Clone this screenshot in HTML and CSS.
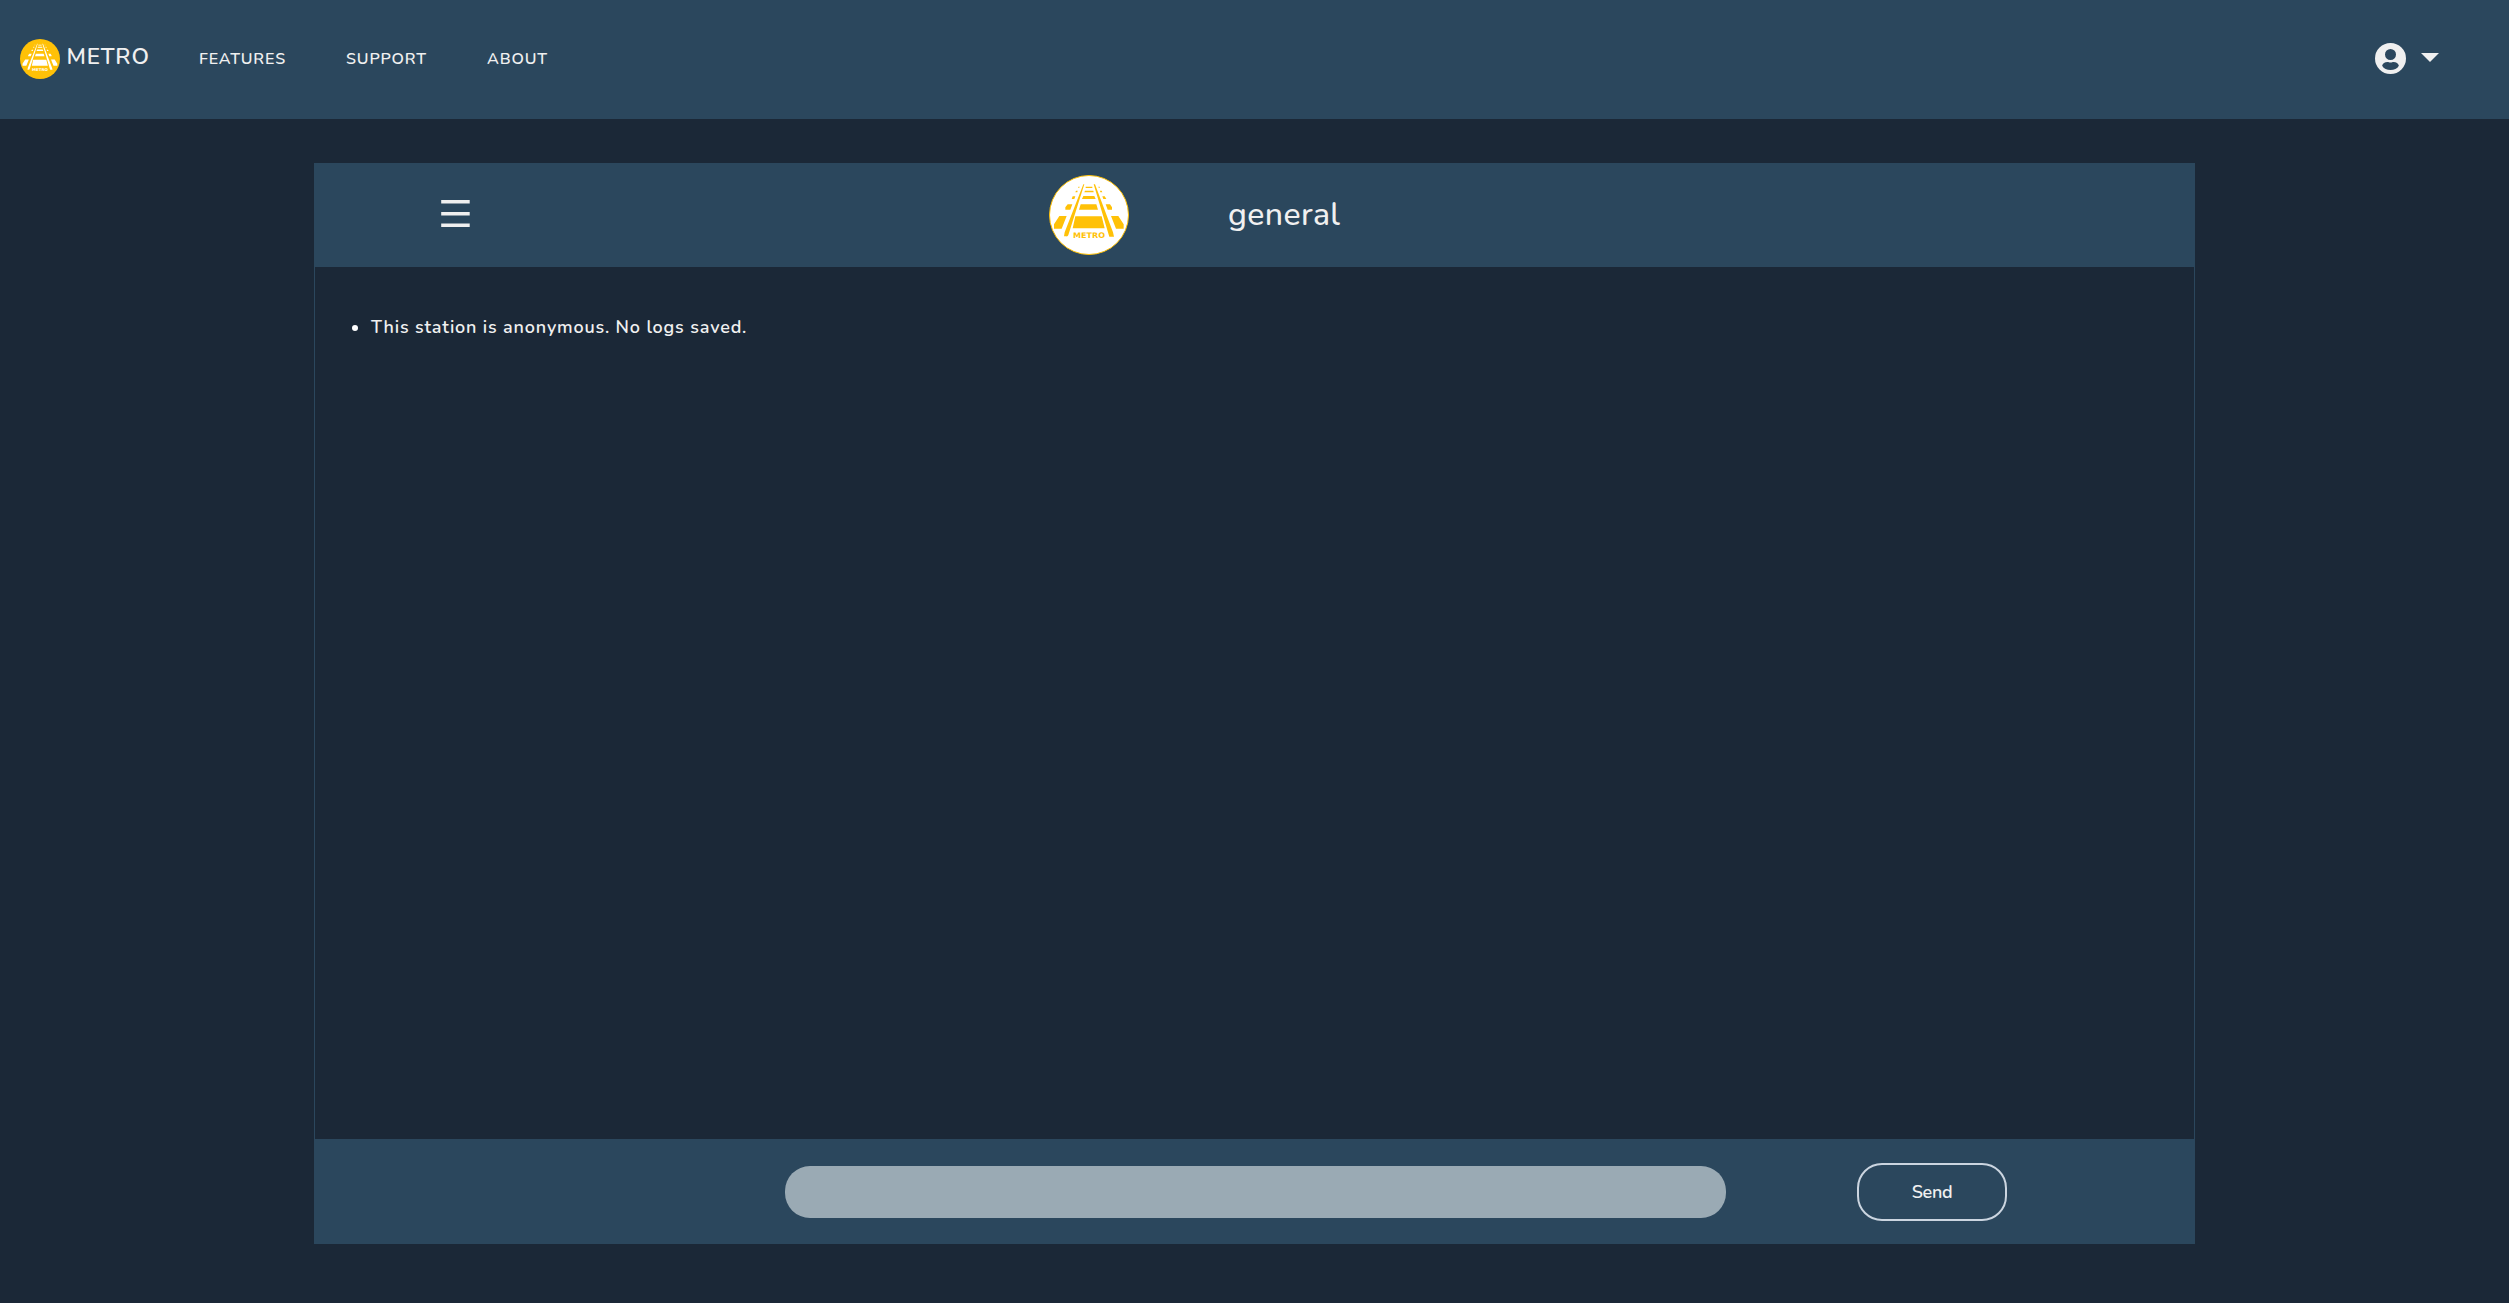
FILE: index.html
```html
<!DOCTYPE html>
<html lang="en">
<head>
<meta charset="utf-8">
<title>Metro</title>
<link rel="stylesheet" href="styles.css">
</head>
<body>
<nav class="nav">
  <a class="brand">
    <svg class="brand-logo" viewBox="57 60 240 240">
      <circle cx="177" cy="180" r="120"/>
      <path id="track" d="M160 88h3L115 240q-2 5-6 4h-7l2-12zM191 88h4l54 144 3 13h-14zM167 95h20v4h-20zM165 107h25l1 5h-28zM160 123h33l4 9h-41zM152 148h47l5 16h-57zM136 184h79l9 36h-96zM88 183h22l-15 38H72v-13zM243 183h22l16 25v13h-23zM113 148h14l-6 16h-15v-7zM227 148h13l6 9v7h-13zM128 124h8l-3 8h-8zM217 124h7l5 8h-9zM138 107h5l-1 5h-6zM210 107h5l2 5h-6zM145 95h4l-1 3h-4zM205 95h4l1 3h-4z"/>
      <text class="logo-text" x="129" y="249" textLength="96" lengthAdjust="spacingAndGlyphs">METRO</text>
    </svg>
    <span class="brand-name">METRO</span>
  </a>
  <a class="link features">FEATURES</a>
  <a class="link support">SUPPORT</a>
  <a class="link about">ABOUT</a>
  <div class="account">
    <svg width="31" height="31" viewBox="0 0 496 496"><path fill-rule="evenodd" d="M248 0a248 248 0 1 0 0 496 248 248 0 1 0 0-496zm0 96a88 88 0 1 1 0 176 88 88 0 1 1 0-176zm0 336c-58 0-108-22-134-68 6-35 43-60 86-60 16 0 25 8 48 8s32-8 48-8c43 0 80 25 86 60-26 46-76 68-134 68z"/></svg>
    <svg class="caret" width="18" height="9" viewBox="0 0 18 9"><path d="M0 0h18L9 9z"/></svg>
  </div>
</nav>
<main class="chat">
  <header class="chat-head">
    <svg class="menu" width="30" height="28" viewBox="0 0 30 28"><path d="M.2 0h28.500v3.500H.2zM.2 12h28.500v3.500H.2zM.2 23.500h28.500V27H.2z"/></svg>
    <svg class="station-logo" viewBox="57 60 240 240">
      <circle cx="177" cy="180" r="118.500"/>
      <use href="#track"/>
      <text class="logo-text" x="129" y="249" textLength="96" lengthAdjust="spacingAndGlyphs">METRO</text>
    </svg>
    <h1 class="station">general</h1>
  </header>
  <ul class="messages">
    <li><span>This station is anonymous. No logs saved.</span></li>
  </ul>
  <form class="composer">
    <input class="field" type="text" aria-label="Message">
    <button class="send" type="button">Send</button>
  </form>
</main>
</body>
</html>
```
FILE: styles.css
```css
* { box-sizing: border-box; }
body {
  margin: 0;
  min-height: 1303px;
  background: #1b2837;
  color: #f0f0f0;
  font-family: Nunito, "Noto Sans", sans-serif;
}
.logo-text { font: bold 23px "DejaVu Sans", sans-serif; }
.nav {
  display: flex;
  align-items: center;
  height: 119px;
  padding: 0 70px 2px 20px;
  background: #2b475d;
}
.brand { display: flex; align-items: center; width: 179px; }
.brand-logo { width: 40px; height: 40px; fill: #fff; }
.brand-logo circle { fill: #ffc107; }
.brand-name {
  margin: -4px 0 0 6.500px;
  font-size: 22.500px;
  font-weight: 600;
  letter-spacing: .9px;
}
.link { font-size: 16px; font-weight: 600; letter-spacing: .85px; }
.features { width: 147px; }
.support { width: 141px; }
.account { display: flex; align-items: center; gap: 15px; margin-left: auto; fill: #f0f0f0; }
.caret { margin-bottom: 2px; }
.chat {
  display: flex;
  flex-direction: column;
  width: 1881px;
  height: 1081px;
  margin: 44px 0 0 314px;
  border: 1px solid #2b475d;
}
.chat-head {
  display: flex;
  align-items: center;
  height: 103px;
  padding: 0 0 1px 126px;
  background: #2b475d;
}
.menu { fill: #f0f0f0; margin-bottom: 2px; }
.station-logo { width: 80px; height: 80px; margin-left: 578px; fill: #ffc107; }
.station-logo circle { fill: #fff; stroke: #ffc107; stroke-width: 3px; }
.station { margin: -2px 0 0 99px; font-size: 32px; font-weight: 500; letter-spacing: .4px; }
.messages {
  flex: 1;
  margin: 0;
  padding: 46px 37px;
  list-style: none;
  font-size: 18px;
  font-weight: 600;
  letter-spacing: .82px;
}
.messages li { display: flex; align-items: center; gap: 13px; line-height: 28px; }
.messages li::before { content: ""; width: 6px; height: 6px; margin-top: 2px; border-radius: 50%; background: #fff; }
.composer {
  display: flex;
  align-items: center;
  height: 104px;
  padding: 1px 0 0 469px;
  background: #2b475d;
}
.field {
  width: 941px;
  height: 52px;
  margin-left: .5px;
  padding: 0 24px;
  border: 0;
  border-radius: 25px;
  background: #9aaab4;
  font: inherit;
}
.send {
  width: 150px;
  height: 58px;
  margin: 1px 0 0 131.500px;
  padding: 0;
  border: 2px solid #cbd5e0;
  border-radius: 25px;
  background: transparent;
  color: #f0f0f0;
  font: 600 18px Nunito, "Noto Sans", sans-serif;
  letter-spacing: -.3px;
}
```
